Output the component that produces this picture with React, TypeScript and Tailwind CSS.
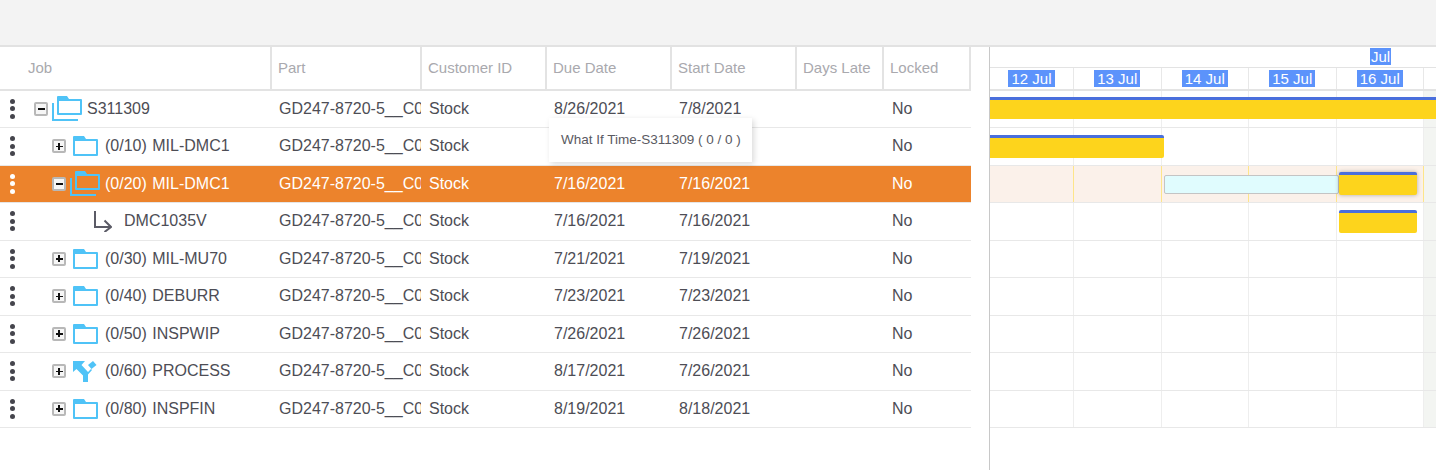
import React from "react";

type Icon = "stack" | "folder" | "branch" | "arrow";

interface Row {
    label: string;
    indent: number;
    toggle: "plus" | "minus" | null;
    icon: Icon;
    due: string;
    start: string;
    selected?: boolean;
}

const rows: Row[] = [
    { label: "S311309", indent: 34, toggle: "minus", icon: "stack", due: "8/26/2021", start: "7/8/2021" },
    { label: "(0/10) MIL-DMC1", indent: 52, toggle: "plus", icon: "folder", due: "", start: "" },
    { label: "(0/20) MIL-DMC1", indent: 52, toggle: "minus", icon: "stack", due: "7/16/2021", start: "7/16/2021", selected: true },
    { label: "DMC1035V", indent: 94, toggle: null, icon: "arrow", due: "7/16/2021", start: "7/16/2021" },
    { label: "(0/30) MIL-MU70", indent: 52, toggle: "plus", icon: "folder", due: "7/21/2021", start: "7/19/2021" },
    { label: "(0/40) DEBURR", indent: 52, toggle: "plus", icon: "folder", due: "7/23/2021", start: "7/23/2021" },
    { label: "(0/50) INSPWIP", indent: 52, toggle: "plus", icon: "folder", due: "7/26/2021", start: "7/26/2021" },
    { label: "(0/60) PROCESS", indent: 52, toggle: "plus", icon: "branch", due: "8/17/2021", start: "7/26/2021" },
    { label: "(0/80) INSPFIN", indent: 52, toggle: "plus", icon: "folder", due: "8/19/2021", start: "8/18/2021" },
];

const days = ["12 Jul", "13 Jul", "14 Jul", "15 Jul", "16 Jul"];

function RowIcon({ icon }: { icon: Icon }) {
    if (icon === "folder") {
        return (
            <svg width="25" height="20" viewBox="0 0 25 20" className="ml-[7px] mr-[7px] shrink-0">
                <path
                    fillRule="evenodd"
                    d="M0 1a1 1 0 0 1 1-1h10l2 3h11a1 1 0 0 1 1 1v15a1 1 0 0 1-1 1H1a1 1 0 0 1-1-1zM2 5v13h21V5z"
                    fill="#4fc3f7"
                />
            </svg>
        );
    }
    if (icon === "stack") {
        return (
            <svg width="30" height="25" viewBox="0 0 30 25" className="ml-[4px] mr-[5px] shrink-0">
                <path
                    fillRule="evenodd"
                    d="M5 1a1 1 0 0 1 1-1h9l2 3h12a1 1 0 0 1 1 1v14a1 1 0 0 1-1 1H6a1 1 0 0 1-1-1zM7 5v12h21V5z"
                    fill="#4fc3f7"
                />
                <path d="M0 7h2v16h24v2H0z" fill="#4fc3f7" />
            </svg>
        );
    }
    if (icon === "branch") {
        return (
            <svg width="24" height="21" viewBox="0 0 24 21" className="ml-[7px] mr-[8px] shrink-0">
                <path d="M0 0h12L8.5 4 15 11l3-3 1 1-4 4.500V21h-5v-6.500L3.500 8 0 11z" fill="#4fc3f7" />
                <path d="M15 4l5-4 3.500 4-5 4z" fill="#4fc3f7" />
            </svg>
        );
    }
    return (
        <svg width="18" height="21" viewBox="0 0 18 21" fill="none" className="mr-[12px] shrink-0">
            <path d="M1 0v16h16M10.500 9.500 17 16l-6.500 5" stroke="#5b5b66" strokeWidth="2" />
        </svg>
    );
}

function Toggle({ type }: { type: "plus" | "minus" }) {
    return (
        <span className="w-[14px] h-[14px] shrink-0 border-2 border-[#b8b8b8] rounded-[2px] bg-[#f6f6f6] relative flex items-center justify-center">
            <span className="w-[7px] h-[1.5px] bg-[#111]" />
            {type === "plus" && <span className="absolute w-[1.5px] h-[7px] bg-[#111]" />}
        </span>
    );
}

function Kebab({ white }: { white?: boolean }) {
    const dot = white ? "w-[5px] h-[5px] rounded-full bg-white" : "w-[5px] h-[5px] rounded-full bg-[#45454d]";
    return (
        <div className="absolute left-[10px] top-1/2 -translate-y-1/2 flex flex-col gap-[2.5px]">
            <span className={dot} />
            <span className={dot} />
            <span className={dot} />
        </div>
    );
}

function GridRow({ row }: { row: Row }) {
    const sel = row.selected;
    return (
        <div
            className={`relative flex h-[37.5px] items-center border-b text-[16px] ${
                sel ? "bg-[#ec832c] text-white border-[#e5e5e5]" : "text-[#4d4d55] border-[#e8e8e8]"
            }`}
        >
            <Kebab white={sel} />
            <div className="w-[272px] flex items-center shrink-0" style={{ paddingLeft: row.indent }}>
                {row.toggle && <Toggle type={row.toggle} />}
                <RowIcon icon={row.icon} />
                <span className="whitespace-nowrap [word-spacing:1px]">{row.label}</span>
            </div>
            <div className="w-[149px] shrink-0 pl-[7px] overflow-hidden whitespace-nowrap">GD247-8720-5__C0</div>
            <div className="w-[125px] shrink-0 pl-[8px]">Stock</div>
            <div className="w-[125px] shrink-0 pl-[8px]">{row.due}</div>
            <div className="w-[125px] shrink-0 pl-[8px]">{row.start}</div>
            <div className="w-[87px] shrink-0" />
            <div className="flex-1 pl-[9px]">No</div>
        </div>
    );
}

function HeaderCell({ label, className }: { label: string; className: string }) {
    return <div className={`shrink-0 h-full flex items-center border-r-2 border-[#e3e3e3] ${className}`}>{label}</div>;
}

function Bar({ className }: { className: string }) {
    return <div className={`absolute bg-[#fdd41c] rounded-[2px] border-t-[3px] border-[#4a6fdc] ${className}`} />;
}

export default function App() {
    return (
        <div className="w-[1436px] h-[470px] bg-white overflow-hidden relative font-['Liberation_Sans',Arial,sans-serif]">
            <div className="h-[47px] bg-[#f3f3f3] border-b-2 border-[#e2e2e2]" />
            <div className="flex h-[423px]">
                {/* Grid side */}
                <div className="w-[971px] shrink-0">
                    <div className="flex h-[43.5px] border-b-2 border-[#e3e3e3] text-[15px] text-[#a9a9ae]">
                        <HeaderCell label="Job" className="w-[272px] pl-[28px]" />
                        <HeaderCell label="Part" className="w-[150px] pl-[6px]" />
                        <HeaderCell label="Customer ID" className="w-[125px] pl-[6px]" />
                        <HeaderCell label="Due Date" className="w-[125px] pl-[6px]" />
                        <HeaderCell label="Start Date" className="w-[125px] pl-[6px]" />
                        <HeaderCell label="Days Late" className="w-[87px] pl-[6px]" />
                        <HeaderCell label="Locked" className="w-[87px] pl-[6px]" />
                    </div>
                    {rows.map((r) => (
                        <GridRow key={r.label} row={r} />
                    ))}
                </div>

                {/* Gantt side */}
                <div className="ml-[18px] flex-1 border-l border-[#c8c8c8] relative overflow-hidden">
                    <div className="h-[21px] border-b border-[#e3e3e3] relative text-[15px]">
                        <span className="absolute left-[380px] top-[1px] bg-[#5c93fb] text-white px-[1px] leading-[17px]">Jul</span>
                    </div>
                    <div className="flex h-[22.5px] border-b-2 border-[#e3e3e3] text-[15px]">
                        {days.map((d, i) => (
                            <div
                                key={d}
                                className={`shrink-0 border-r border-[#e8e8e8] flex items-center justify-center ${
                                    i === 0 ? "w-[84px]" : "w-[87.5px]"
                                }`}
                            >
                                <span className="bg-[#5c93fb] text-white px-[3px] leading-[17px]">{d}</span>
                            </div>
                        ))}
                    </div>
                    <div className="relative">
                        {rows.map((r) => (
                            <div
                                key={r.label}
                                className={`flex h-[37.5px] border-b border-[#e8e8e8] ${r.selected ? "bg-[#fbf1ea]" : ""}`}
                            >
                                {days.map((d, i) => (
                                    <div
                                        key={d}
                                        className={`shrink-0 border-r ${i === 0 ? "w-[84px]" : "w-[87.5px]"} ${
                                            r.selected ? "border-[#fde58a]" : "border-[#eeeeee]"
                                        }`}
                                    />
                                ))}
                                <div className="flex-1 bg-[#f3f5f2]" />
                            </div>
                        ))}
                        <Bar className="left-0 right-0 top-[6px] h-[22px] rounded-none" />
                        <Bar className="left-0 w-[174px] top-[44px] h-[23px] rounded-l-none" />
                        <div className="absolute left-[174px] w-[175px] top-[84px] h-[19px] bg-[#e0fcfe] border border-[#c4c4c4] rounded-[2px]" />
                        <Bar className="left-[349px] w-[78px] top-[81px] h-[23px] shadow-[0_0_4px_rgba(0,0,0,0.3)]" />
                        <Bar className="left-[349px] w-[78px] top-[119px] h-[23px]" />
                    </div>
                </div>
            </div>

            {/* Tooltip */}
            <div className="absolute left-[549px] top-[118px] w-[203px] h-[44px] bg-white shadow-[2px_2px_6px_rgba(0,0,0,0.15)] flex items-center pl-[12px] text-[13.5px] text-[#5a5a62] whitespace-nowrap">
                What If Time-S311309 ( 0 / 0 )
            </div>
        </div>
    );
}
